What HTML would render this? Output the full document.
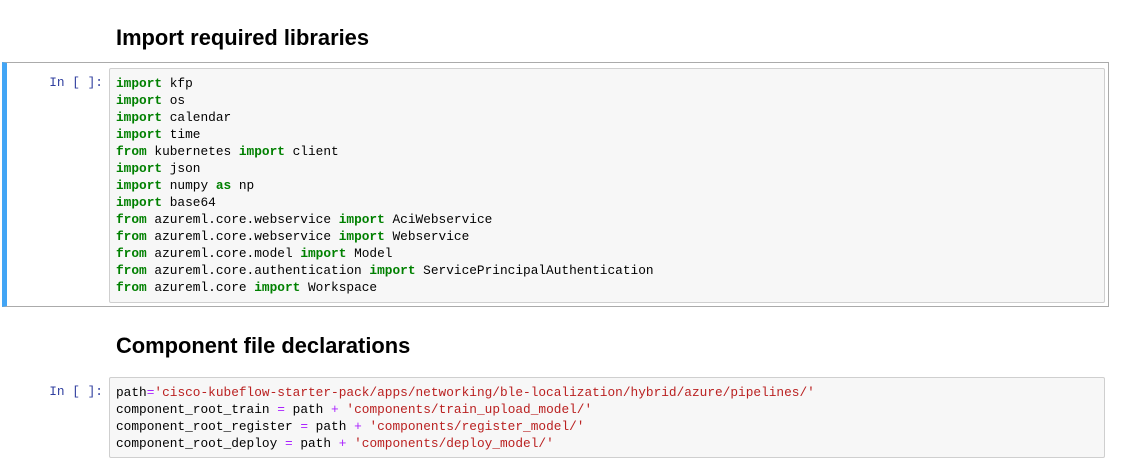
<!DOCTYPE html>
<html><head><style>
body{margin:0;width:1124px;height:473px;background:#fff;position:relative;overflow:hidden;font-family:"Liberation Sans",sans-serif}
h2{position:absolute;left:116px;margin:0;font-size:21.9px;font-weight:bold;color:#000;line-height:26px}
.sel{position:absolute;left:2px;top:62px;width:1107px;height:245px;border:1px solid #ababab;border-left:5px solid #42a5f5;box-sizing:border-box}
.inp{position:absolute;left:109px;width:996px;background:#f7f7f7;border:1px solid #cfcfcf;border-radius:2px;box-sizing:border-box;padding:6px 6px;font-family:"Liberation Mono",monospace;font-size:12.8px;line-height:17px;color:#000;white-space:pre}
.pr{position:absolute;left:0;width:103px;text-align:right;font-family:"Liberation Mono",monospace;font-size:12.8px;color:#303f9f}
.k{color:#008000;font-weight:bold}.s{color:#ba2121}.o{color:#aa22ff}
</style></head><body>
<h2 style="top:25px">Import required libraries</h2>
<div class="sel"></div>
<div class="pr" style="top:75px">In [ ]:</div>
<div class="inp" style="top:68px;height:235px"><span class="k">import</span> kfp
<span class="k">import</span> os
<span class="k">import</span> calendar
<span class="k">import</span> time
<span class="k">from</span> kubernetes <span class="k">import</span> client
<span class="k">import</span> json
<span class="k">import</span> numpy <span class="k">as</span> np
<span class="k">import</span> base64
<span class="k">from</span> azureml.core.webservice <span class="k">import</span> AciWebservice
<span class="k">from</span> azureml.core.webservice <span class="k">import</span> Webservice
<span class="k">from</span> azureml.core.model <span class="k">import</span> Model
<span class="k">from</span> azureml.core.authentication <span class="k">import</span> ServicePrincipalAuthentication
<span class="k">from</span> azureml.core <span class="k">import</span> Workspace</div>
<h2 style="top:333px">Component file declarations</h2>
<div class="pr" style="top:384px">In [ ]:</div>
<div class="inp" style="top:377px;height:81px">path<span class="o">=</span><span class="s">'cisco-kubeflow-starter-pack/apps/networking/ble-localization/hybrid/azure/pipelines/'</span>
component_root_train <span class="o">=</span> path <span class="o">+</span> <span class="s">'components/train_upload_model/'</span>
component_root_register <span class="o">=</span> path <span class="o">+</span> <span class="s">'components/register_model/'</span>
component_root_deploy <span class="o">=</span> path <span class="o">+</span> <span class="s">'components/deploy_model/'</span></div>
</body></html>
